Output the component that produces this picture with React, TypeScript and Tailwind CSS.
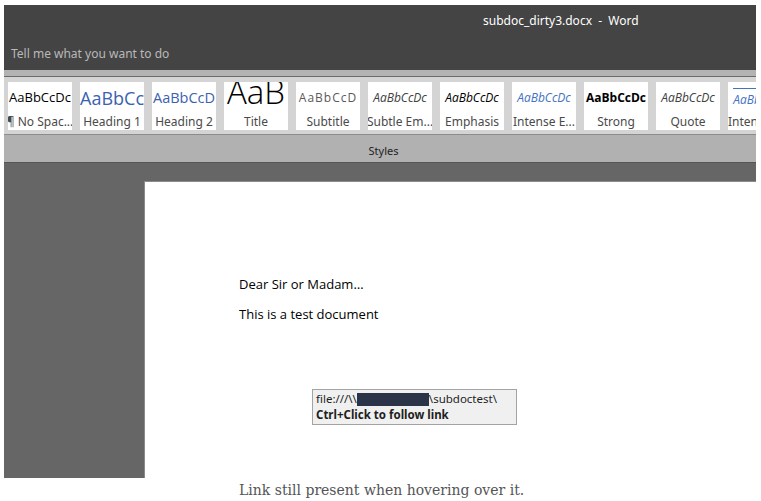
import React from 'react';

const ui = { fontFamily: '"Noto Sans", "Open Sans", sans-serif' };
const doc = { fontFamily: '"Open Sans", "Noto Sans", sans-serif' };

type StyleTile = {
  label: string;
  sample: string;
  cls: string;
  topLine?: boolean;
};

const tiles: StyleTile[] = [
  { label: '¶ No Spac...', sample: 'AaBbCcDc', cls: 'text-[13px] text-black' },
  { label: 'Heading 1', sample: 'AaBbCc', cls: 'text-[18px] text-[#3a62b0]' },
  { label: 'Heading 2', sample: 'AaBbCcD', cls: 'text-[14.5px] text-[#3a62b0]' },
  { label: 'Title', sample: 'AaB', cls: 'text-[33px] text-black font-light leading-none -mt-[14px]' },
  { label: 'Subtitle', sample: 'AaBbCcD', cls: 'text-[12px] text-[#5a5a5a] tracking-[1px]' },
  { label: 'Subtle Em...', sample: 'AaBbCcDc', cls: 'text-[12px] italic text-[#404040]' },
  { label: 'Emphasis', sample: 'AaBbCcDc', cls: 'text-[12px] italic text-black' },
  { label: 'Intense E...', sample: 'AaBbCcDc', cls: 'text-[12px] italic text-[#4472c4]' },
  { label: 'Strong', sample: 'AaBbCcDc', cls: 'text-[12px] font-bold text-black' },
  { label: 'Quote', sample: 'AaBbCcDc', cls: 'text-[12px] italic text-[#404040]' },
  { label: 'Intense Q...', sample: 'AaBbCcDc', cls: 'text-[12px] italic text-[#4472c4]', topLine: true },
];

function Tile({ t }: { t: StyleTile }) {
  return (
    <div className="w-[64px] h-[48px] shrink-0 bg-white flex flex-col items-center overflow-hidden">
      <div className="h-[32px] w-full flex items-center justify-center overflow-hidden px-[2px]">
        <span
          className={`whitespace-nowrap ${t.cls} ${t.topLine ? 'border-t border-[#4472c4] pt-[2px]' : ''}`}
          style={doc}
        >
          {t.sample}
        </span>
      </div>
      <div className="h-[16px] w-full flex items-center justify-center text-[12px] leading-[16px] text-[#4a4a4a] whitespace-nowrap" style={ui}>
        {t.label}
      </div>
    </div>
  );
}

export default function App() {
  return (
    <div className="w-[761px] h-[501px] bg-white overflow-hidden">
      <div className="ml-[4px] pt-[5px] w-[752px]">
        {/* title bar */}
        <div className="h-[65px] bg-[#444444] flex flex-col">
          <div className="h-[32px] flex items-center pl-[479px] text-[12px] text-white" style={ui}>
            subdoc_dirty3.docx&nbsp;&nbsp;-&nbsp;&nbsp;Word
          </div>
          <div className="pt-[9px] pl-[7px] text-[12px] leading-[16px] text-[#b9b9b9]" style={ui}>
            Tell me what you want to do
          </div>
        </div>
        <div className="h-[6px] bg-[#b3b3b3]" />
        <div className="h-px bg-[#6b6b6b]" />

        {/* style gallery */}
        <div className="h-[57px] bg-[#d4d4d4] flex gap-[8px] pl-[4px] pt-[5px] overflow-hidden">
          {tiles.map((t) => (
            <Tile key={t.label} t={t} />
          ))}
        </div>
        <div className="h-px bg-[#8c8c8c]" />
        <div className="h-[27px] bg-[#b1b1b1] flex items-end justify-center pb-[3px]">
          <span className="text-[11px] text-[#222] pl-[7px]" style={ui}>Styles</span>
        </div>
        <div className="h-px bg-[#555]" />

        {/* canvas */}
        <div className="h-[315px] bg-[#666666] pt-[18px] pl-[140px]">
          <div className="relative h-full bg-white border-l border-t border-[#8a8a8a]">
            <div className="pt-[93px] pl-[94px] text-[13px] leading-[18px] text-black" style={doc}>
              <p>Dear Sir or Madam…</p>
              <p className="mt-[12px]">This is a test document</p>
            </div>

            {/* hyperlink tooltip */}
            <div
              className="absolute left-[167px] top-[207px] w-[205px] h-[36px] bg-[#f0f0f0] border border-[#a3a3a3] px-[3px] pt-[1px] text-[11.5px] leading-[16px] text-[#1e1e1e]"
              style={ui}
            >
              <div className="flex items-center whitespace-nowrap">
                <span>file:///\\</span>
                <span className="inline-block w-[72px] h-[13px] bg-[#2a3347]" />
                <span>\subdoctest\</span>
              </div>
              <div className="font-bold whitespace-nowrap">Ctrl+Click to follow link</div>
            </div>
          </div>
        </div>
      </div>

      <p
        className="mt-[2px] ml-[239px] text-[14px] leading-[20px] text-[#555]"
        style={{ fontFamily: '"DejaVu Serif", "Liberation Serif", serif' }}
      >
        Link still present when hovering over it.
      </p>
    </div>
  );
}
